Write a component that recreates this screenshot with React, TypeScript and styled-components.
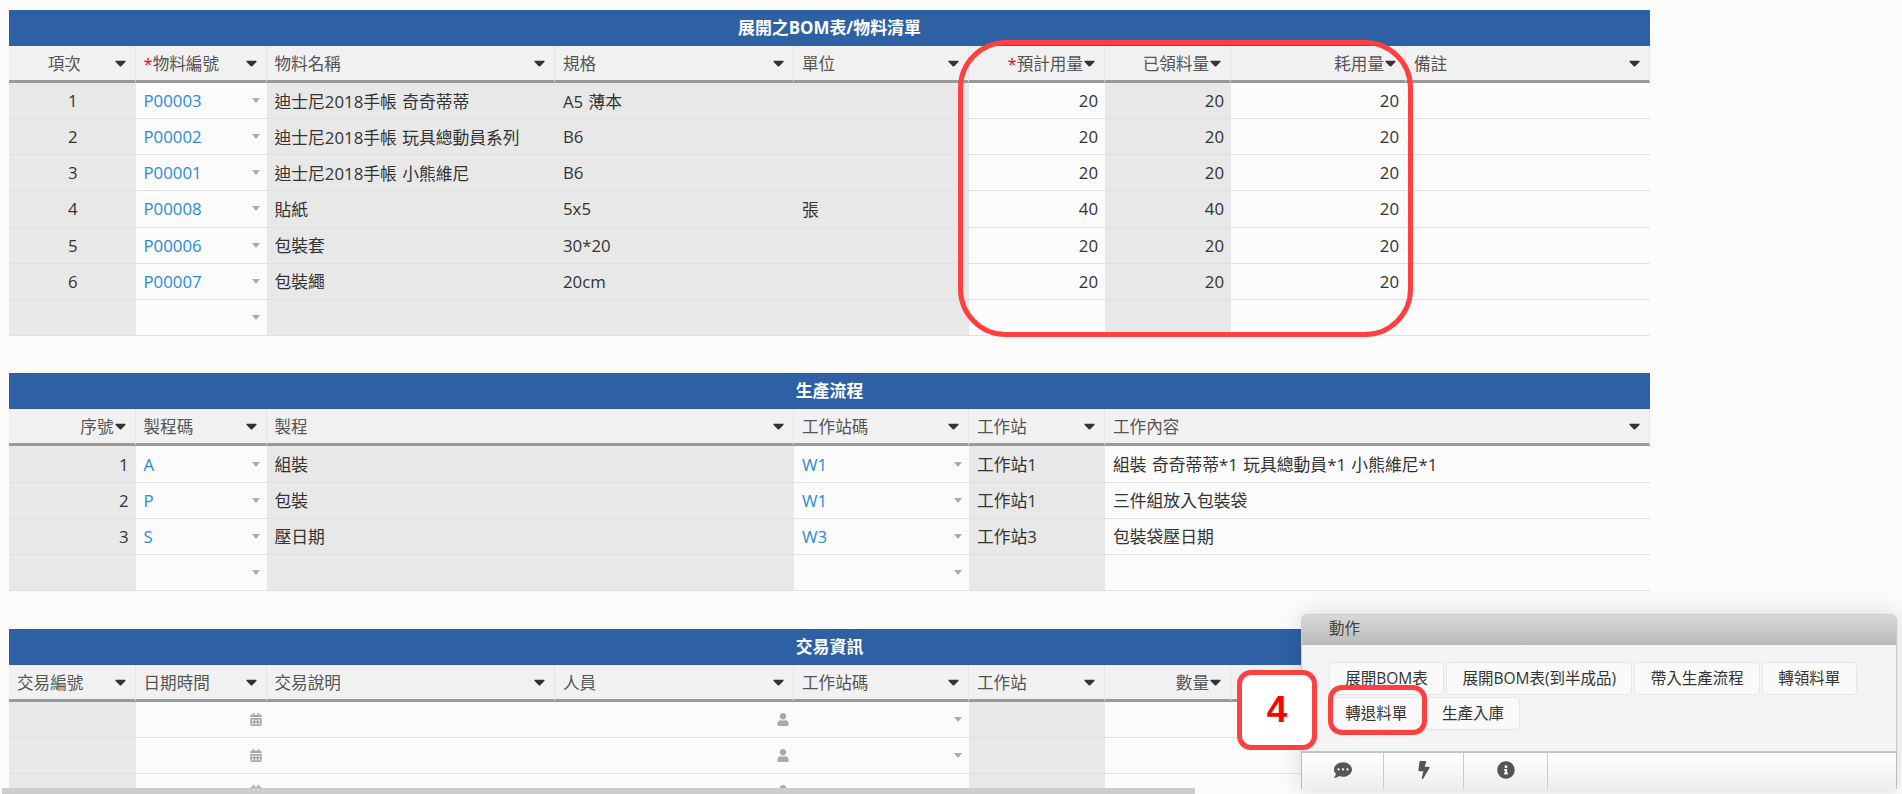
import React from "react";
import styled, { createGlobalStyle } from "styled-components";
import { FaBolt, FaCalendarAlt, FaCaretDown, FaCommentDots, FaInfoCircle, FaUser } from "react-icons/fa";

const Global = createGlobalStyle`
  html, body { margin: 0; padding: 0; height: 794px; overflow: hidden; background: #fbfbfb; }
  body { font-family: "Open Sans", "Noto Sans CJK TC", sans-serif; font-size: 16.6px; color: #333; }
`;

const Page = styled.div`
  position: relative;
  width: 1902px;
  height: 794px;
  overflow: hidden;
  padding: 10px 0 0 9px;
  box-sizing: border-box;
`;

const Section = styled.section`
  width: 1641px;
  margin-bottom: 37.5px;
`;

const TitleBar = styled.h2`
  margin: 0;
  height: 36px;
  background: #2e60a4;
  color: #fff;
  font-size: 16.9px;
  font-weight: 700;
  line-height: 36px;
  text-align: center;
`;

const Grid = styled.div<{ $cols: string }>`
  display: grid;
  grid-template-columns: ${(p) => p.$cols};
  grid-template-rows: 37px;
  grid-auto-rows: 36.15px;
`;

const HeadCell = styled.div`
  display: flex;
  align-items: center;
  box-sizing: border-box;
  padding: 0 9px 0 8px;
  background: #f1f1f1;
  border-bottom: 3px solid #999;
  border-right: 1px solid #e6e6e6;
  color: #555;
`;

const HeadText = styled.span<{ $align: string }>`
  flex: 1;
  margin-right: ${(p) => (p.$align === "center" ? "3px" : "1px")};
  text-align: ${(p) => p.$align};
  white-space: nowrap;
`;

const Star = styled.span`
  color: #f00;
`;

const Caret = styled(FaCaretDown)`
  width: 11px;
  height: 18px;
  flex: none;
  color: #333;
`;

const Cell = styled.div<{ $ro: boolean; $align: string; $link: boolean }>`
  display: flex;
  align-items: center;
  justify-content: ${(p) => (p.$align === "right" ? "flex-end" : p.$align === "center" ? "center" : "flex-start")};
  box-sizing: border-box;
  padding: 0 7px 0 8px;
  background: ${(p) => (p.$ro ? "#e8e8e8" : "#fbfbfb")};
  border-bottom: 1px solid #e0e0e0;
  color: ${(p) => (p.$link ? "#2a8bd8" : "#333")};
  font-size: 16.8px;
  word-spacing: 1px;
  white-space: nowrap;
`;

const Adorn = styled.span`
  margin-left: auto;
  display: flex;
  align-items: center;
  justify-content: center;
  width: 12px;
  margin-right: -2px;
  color: #a9a9a9;
`;

const SmallCaret = styled.i`
  display: block;
  width: 0;
  height: 0;
  border-left: 4px solid transparent;
  border-right: 4px solid transparent;
  border-top: 5px solid #aaa;
`;

const Frame = styled.div`
  position: absolute;
  left: 958px;
  top: 40px;
  width: 455px;
  height: 297px;
  box-sizing: border-box;
  border: 5px solid #ff4040;
  border-radius: 48px;
  pointer-events: none;
`;

const Panel = styled.aside`
  position: absolute;
  left: 1301px;
  top: 614px;
  width: 596px;
  box-shadow: 0 0 22px rgba(0, 0, 0, 0.14);
  border-radius: 6px 6px 0 0;
  color: #333;
`;

const PanelHead = styled.header`
  height: 31px;
  box-sizing: border-box;
  padding-left: 27px;
  background: linear-gradient(#d9d9d9, #b9b9b9);
  border: 1px solid #ccc;
  border-bottom: 0;
  border-radius: 6px 6px 0 0;
  color: #444;
  font-size: 15.5px;
  line-height: 26px;
`;

const PanelBody = styled.div`
  height: 108px;
  box-sizing: border-box;
  padding: 17px 20px 0 27px;
  display: flex;
  flex-wrap: wrap;
  align-content: flex-start;
  gap: 2px;
  background: #f4f4f4;
  border: 1px solid #ccc;
  border-width: 0 1px 2px;
  border-bottom-color: #c4c4c4;
`;

const ActionButton = styled.button`
  height: 33px;
  padding: 0 15.3px;
  border: 1px solid #e6e6e6;
  border-radius: 4px;
  background: #fafafa;
  color: #333;
  font-family: inherit;
  font-size: 15.5px;
  line-height: 31px;
  white-space: nowrap;
`;

const PanelTabs = styled.nav`
  height: 36px;
  display: flex;
  box-sizing: border-box;
  background: linear-gradient(#fff, #eee);
  border-left: 1px solid #bbb;
  border-right: 1px solid #bbb;
`;

const TabCell = styled.div<{ $w: number }>`
  width: ${(p) => p.$w}px;
  box-sizing: border-box;
  border-right: 1px solid #ccc;
  display: flex;
  justify-content: center;
  padding-top: 8px;
  color: #555;
  font-size: 18px;
`;

const Badge = styled.div`
  position: absolute;
  left: 1237px;
  top: 670px;
  width: 80px;
  height: 80px;
  box-sizing: border-box;
  display: flex;
  align-items: center;
  justify-content: center;
  background: #fff;
  border: 5px solid #ff4040;
  border-radius: 14px;
  color: #f00;
  font-family: "Liberation Sans", sans-serif;
  font-size: 37px;
  font-weight: 700;
`;

const ButtonRing = styled.div`
  position: absolute;
  left: 1328px;
  top: 685px;
  width: 99px;
  height: 50px;
  box-sizing: border-box;
  border: 5px solid #ff4040;
  border-radius: 14px;
  pointer-events: none;
`;

const ScrollThumb = styled.div`
  position: absolute;
  left: 2px;
  bottom: 0;
  width: 1193px;
  height: 6px;
  background: #cdcdcd;
`;

type Col = { w: number; label: string; req?: boolean; align?: "left" | "right" | "center"; ro?: boolean; link?: boolean; adorn?: "select" | "date" | "user" };

const W = [126.5, 131, 288.5, 239, 175, 136, 126, 175, 244];
const cols = (ws: number[]) => ws.map((n) => `${n}px`).join(" ");

const bomCols: Col[] = [
  { w: W[0], label: "項次", align: "center", ro: true },
  { w: W[1], label: "物料編號", req: true, link: true, adorn: "select" },
  { w: W[2], label: "物料名稱", ro: true },
  { w: W[3], label: "規格", ro: true },
  { w: W[4], label: "單位", ro: true },
  { w: W[5], label: "預計用量", req: true, align: "right" },
  { w: W[6], label: "已領料量", align: "right", ro: true },
  { w: W[7], label: "耗用量", align: "right" },
  { w: W[8], label: "備註" },
];
const bomRows = [
  ["1", "P00003", "迪士尼2018手帳 奇奇蒂蒂", "A5 薄本", "", "20", "20", "20", ""],
  ["2", "P00002", "迪士尼2018手帳 玩具總動員系列", "B6", "", "20", "20", "20", ""],
  ["3", "P00001", "迪士尼2018手帳 小熊維尼", "B6", "", "20", "20", "20", ""],
  ["4", "P00008", "貼紙", "5x5", "張", "40", "40", "20", ""],
  ["5", "P00006", "包裝套", "30*20", "", "20", "20", "20", ""],
  ["6", "P00007", "包裝繩", "20cm", "", "20", "20", "20", ""],
  ["", "", "", "", "", "", "", "", ""],
];

const flowCols: Col[] = [
  { w: W[0], label: "序號", align: "right", ro: true },
  { w: W[1], label: "製程碼", link: true, adorn: "select" },
  { w: W[2] + W[3], label: "製程", ro: true },
  { w: W[4], label: "工作站碼", link: true, adorn: "select" },
  { w: W[5], label: "工作站", ro: true },
  { w: W[6] + W[7] + W[8], label: "工作內容" },
];
const flowRows = [
  ["1", "A", "組裝", "W1", "工作站1", "組裝 奇奇蒂蒂*1 玩具總動員*1 小熊維尼*1"],
  ["2", "P", "包裝", "W1", "工作站1", "三件組放入包裝袋"],
  ["3", "S", "壓日期", "W3", "工作站3", "包裝袋壓日期"],
  ["", "", "", "", "", ""],
];

const tradeCols: Col[] = [
  { w: W[0], label: "交易編號", ro: true },
  { w: W[1], label: "日期時間", adorn: "date" },
  { w: W[2], label: "交易說明" },
  { w: W[3], label: "人員", adorn: "user" },
  { w: W[4], label: "工作站碼", adorn: "select" },
  { w: W[5], label: "工作站", ro: true },
  { w: W[6], label: "數量", align: "right" },
  { w: W[7] + W[8], label: "" },
];
const tradeRows = Array.from({ length: 3 }, () => ["", "", "", "", "", "", "", ""]);

const AdornIcon = ({ kind }: { kind: NonNullable<Col["adorn"]> }) => (
  <Adorn>
    {kind === "select" && <SmallCaret />}
    {kind === "date" && <FaCalendarAlt size={13} />}
    {kind === "user" && <FaUser size={13} />}
  </Adorn>
);

const DataTable = ({ title, columns, rows }: { title: string; columns: Col[]; rows: string[][] }) => (
  <Section>
    <TitleBar>{title}</TitleBar>
    <Grid $cols={cols(columns.map((c) => c.w))}>
      {columns.map((c, i) => (
        <HeadCell key={i}>
          <HeadText $align={c.align ?? "left"}>
            {c.req && <Star>*</Star>}
            {c.label}
          </HeadText>
          {c.label && <Caret />}
        </HeadCell>
      ))}
      {rows.flatMap((row, r) =>
        row.map((v, i) => {
          const c = columns[i];
          return (
            <Cell key={`${r}-${i}`} $ro={!!c.ro} $align={c.align ?? "left"} $link={!!c.link}>
              {v}
              {c.adorn && <AdornIcon kind={c.adorn} />}
            </Cell>
          );
        })
      )}
    </Grid>
  </Section>
);

export default function App() {
  return (
    <Page>
      <Global />
      <DataTable title="展開之BOM表/物料清單" columns={bomCols} rows={bomRows} />
      <DataTable title="生產流程" columns={flowCols} rows={flowRows} />
      <DataTable title="交易資訊" columns={tradeCols} rows={tradeRows} />
      <Frame />
      <ScrollThumb />
      <Panel>
        <PanelHead>動作</PanelHead>
        <PanelBody>
          <ActionButton>展開BOM表</ActionButton>
          <ActionButton>展開BOM表(到半成品)</ActionButton>
          <ActionButton>帶入生產流程</ActionButton>
          <ActionButton>轉領料單</ActionButton>
          <ActionButton>轉退料單</ActionButton>
          <ActionButton>生產入庫</ActionButton>
        </PanelBody>
        <PanelTabs>
          <TabCell $w={82}><FaCommentDots /></TabCell>
          <TabCell $w={80}><FaBolt /></TabCell>
          <TabCell $w={84}><FaInfoCircle /></TabCell>
        </PanelTabs>
      </Panel>
      <ButtonRing />
      <Badge>4</Badge>
    </Page>
  );
}
